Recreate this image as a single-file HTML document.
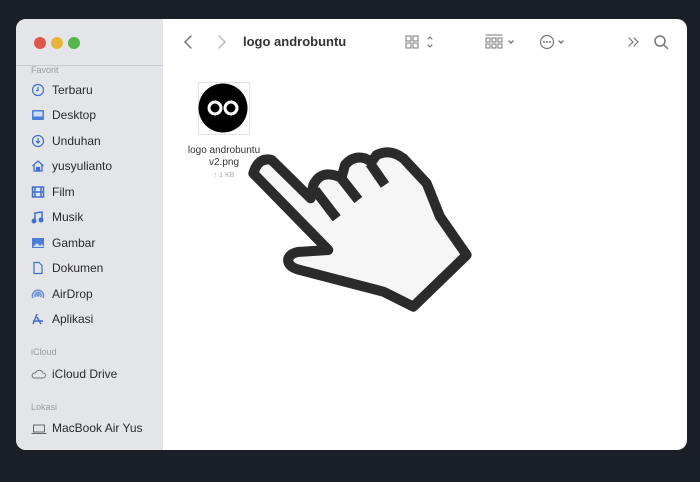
<!DOCTYPE html>
<html><head><meta charset="utf-8"><style>
*{margin:0;padding:0;box-sizing:border-box}
body{width:700px;height:482px;background:#1b1f27;font-family:"Liberation Sans",sans-serif;position:relative;overflow:hidden}
.win{position:absolute;left:16px;top:19px;width:671px;height:431px;background:#fff;border-radius:10px;overflow:hidden}
.side{position:absolute;left:0;top:0;width:147px;height:431px;background:#e4e5e8}
.t{position:absolute;font-size:12px;color:#2a2a2e;left:36px}
.h{position:absolute;font-size:9px;color:#9a9ba0;left:15px}
.ic{position:absolute;left:15px}
</style></head><body>
<div class="win">
<div class="side">
<div style="position:absolute;left:18px;top:18px;width:12px;height:12px;border-radius:50%;background:#e0564f"></div>
<div style="position:absolute;left:35px;top:18px;width:12px;height:12px;border-radius:50%;background:#e6b53c"></div>
<div style="position:absolute;left:52px;top:18px;width:12px;height:12px;border-radius:50%;background:#54b548"></div>
<div style="position:absolute;left:0;top:46px;width:147px;height:1px;background:#c9cacd"></div>
<div class="h" style="top:46px">Favorit</div>
<svg class="ic" style="top:64px" width="14" height="14" fill="none" stroke="#3d6fd0" stroke-width="1.2"><circle cx="7" cy="7" r="5.5"/><path d="M7 4v3.5H5"/></svg><div class="t" style="top:64px">Terbaru</div>
<svg class="ic" style="top:89px" width="14" height="14"><rect x="1" y="2" width="12" height="10" rx="1" fill="#4a7ed8"/><rect x="2.5" y="3.5" width="9" height="5" fill="#cfdcf5"/></svg><div class="t" style="top:89px">Desktop</div>
<svg class="ic" style="top:115px" width="14" height="14" fill="none" stroke="#3d6fd0" stroke-width="1.2"><circle cx="7" cy="7" r="5.5"/><path d="M7 4v5M5 7l2 2 2-2"/></svg><div class="t" style="top:115px">Unduhan</div>
<svg class="ic" style="top:140px" width="14" height="14" fill="none" stroke="#3d6fd0" stroke-width="1.3"><path d="M1.5 7L7 2l5.5 5M3 6v6h8V6"/><rect x="5.5" y="8.5" width="3" height="3.5" fill="#3d6fd0"/></svg><div class="t" style="top:140px">yusyulianto</div>
<svg class="ic" style="top:166px" width="14" height="14" fill="none" stroke="#3d6fd0" stroke-width="1.5"><rect x="1.5" y="2" width="11" height="10"/><path d="M1.5 7h11M4 2v10M10 2v10"/></svg><div class="t" style="top:166px">Film</div>
<svg class="ic" style="top:191px" width="14" height="14" fill="none" stroke="#3d6fd0" stroke-width="1.5"><path d="M4 11V3l7-1v8"/><circle cx="3" cy="11" r="1.7" fill="#3d6fd0"/><circle cx="10" cy="10" r="1.7" fill="#3d6fd0"/></svg><div class="t" style="top:191px">Musik</div>
<svg class="ic" style="top:217px" width="14" height="14"><rect x="1" y="2" width="12" height="10" fill="#4a7ed8"/><path d="M2 11l4-4 3 3 2-2 2 3z" fill="#cfdcf5"/></svg><div class="t" style="top:217px">Gambar</div>
<svg class="ic" style="top:242px" width="14" height="14" fill="none" stroke="#3d6fd0" stroke-width="1.2"><path d="M3 1.5h5l3 3v8H3z"/></svg><div class="t" style="top:242px">Dokumen</div>
<svg class="ic" style="top:268px" width="14" height="14" fill="none" stroke="#6f94d8" stroke-width="1.6"><path d="M2 11a5.5 5.5 0 1 1 10 0M4.5 10a3 3 0 1 1 5 0"/><circle cx="7" cy="8" r="1" fill="#6f94d8"/></svg><div class="t" style="top:268px">AirDrop</div>
<svg class="ic" style="top:293px" width="14" height="14" fill="none" stroke="#3d6fd0" stroke-width="1.5"><path d="M6 2l-4 10M6 5l4 7M2 9h10"/></svg><div class="t" style="top:293px">Aplikasi</div>
<div class="h" style="top:328px">iCloud</div>
<svg class="ic" style="top:348px" width="15" height="14" fill="none" stroke="#777" stroke-width="1"><path d="M3 11h9a2.5 2.5 0 0 0 0-5 4 4 0 0 0-7.5 0A2.5 2.5 0 0 0 3 11z"/></svg><div class="t" style="top:348px">iCloud Drive</div>
<div class="h" style="top:383px">Lokasi</div>
<svg class="ic" style="top:403px" width="16" height="14" fill="none" stroke="#666" stroke-width="1"><rect x="2.5" y="3" width="11" height="7"/><path d="M0.5 11.5h15"/></svg><div class="t" style="top:402px">MacBook Air Yus</div>
</div>
<svg style="position:absolute;left:160px;top:12px" width="510" height="24" fill="none" stroke="#777" stroke-width="1.5" stroke-linecap="round">
<path d="M15 5l-6 6 6 6"/><path d="M43 5l6 6-6 6" stroke="#bbb"/>
<g stroke-width="1"><rect x="230" y="5" width="5" height="5"/><rect x="237" y="5" width="5" height="5"/><rect x="230" y="12" width="5" height="5"/><rect x="237" y="12" width="5" height="5"/></g>
<path d="M252 8l2-2 2 2M252 14l2 2 2-2" stroke-width="1.2"/>
<g stroke-width="1"><path d="M310 4h16"/><rect x="310" y="7" width="4" height="4"/><rect x="316" y="7" width="4" height="4"/><rect x="322" y="7" width="4" height="4"/><rect x="310" y="13" width="4" height="4"/><rect x="316" y="13" width="4" height="4"/><rect x="322" y="13" width="4" height="4"/></g>
<path d="M333 10l2 2 2-2"/>
<circle cx="371" cy="11" r="6.5" stroke-width="1.2"/><g fill="#777" stroke="none"><circle cx="368" cy="11" r="1"/><circle cx="371" cy="11" r="1"/><circle cx="374" cy="11" r="1"/></g>
<path d="M383 10l2 2 2-2"/>
<path d="M453 7l4 4-4 4M458 7l4 4-4 4" stroke-width="1.2"/>
<circle cx="484" cy="10" r="5" /><path d="M488 14l3.5 3.5"/>
</svg>
<div style="position:absolute;left:227px;top:15px;font-size:13px;font-weight:bold;color:#333">logo androbuntu</div>
<div style="position:absolute;left:182px;top:63px;width:52px;height:53px;border:1px solid #e2e2e2;background:#fff"></div>
<svg style="position:absolute;left:182px;top:63px" width="52" height="53"><circle cx="25" cy="26" r="24.5" fill="#000"/><circle cx="17" cy="26" r="6" fill="none" stroke="#fff" stroke-width="3"/><circle cx="33" cy="26" r="6" fill="none" stroke="#fff" stroke-width="3"/></svg>
<div style="position:absolute;left:152px;top:126px;width:112px;text-align:center;font-size:10px;color:#333;line-height:12px">logo androbuntu<br>v2.png</div>
<div style="position:absolute;left:152px;top:153px;width:112px;text-align:center;font-size:7px;color:#aaa">↑ 1 KB</div>
</div>
<svg style="position:absolute;left:0;top:0" width="700" height="482">
<g transform="translate(240,140) scale(0.3333)" stroke="#2b2b2b" stroke-width="30" stroke-linejoin="round" stroke-linecap="butt">
<path fill="#f6f6f6" d="M40,100 Q55,50 95,60 L212,175 L220,135 Q240,95 280,105 L305,112 L315,75 Q340,45 375,55 L395,65 L410,45 Q450,25 490,55 L560,130 L600,230 L680,345 L520,500 L430,455 L180,390 Q140,380 145,355 Q155,335 190,335 L265,330 Z"/>
<path fill="none" d="M225,150 L290,235 M300,110 L355,180 M390,70 L435,135"/>
</g></svg>
</body></html>
